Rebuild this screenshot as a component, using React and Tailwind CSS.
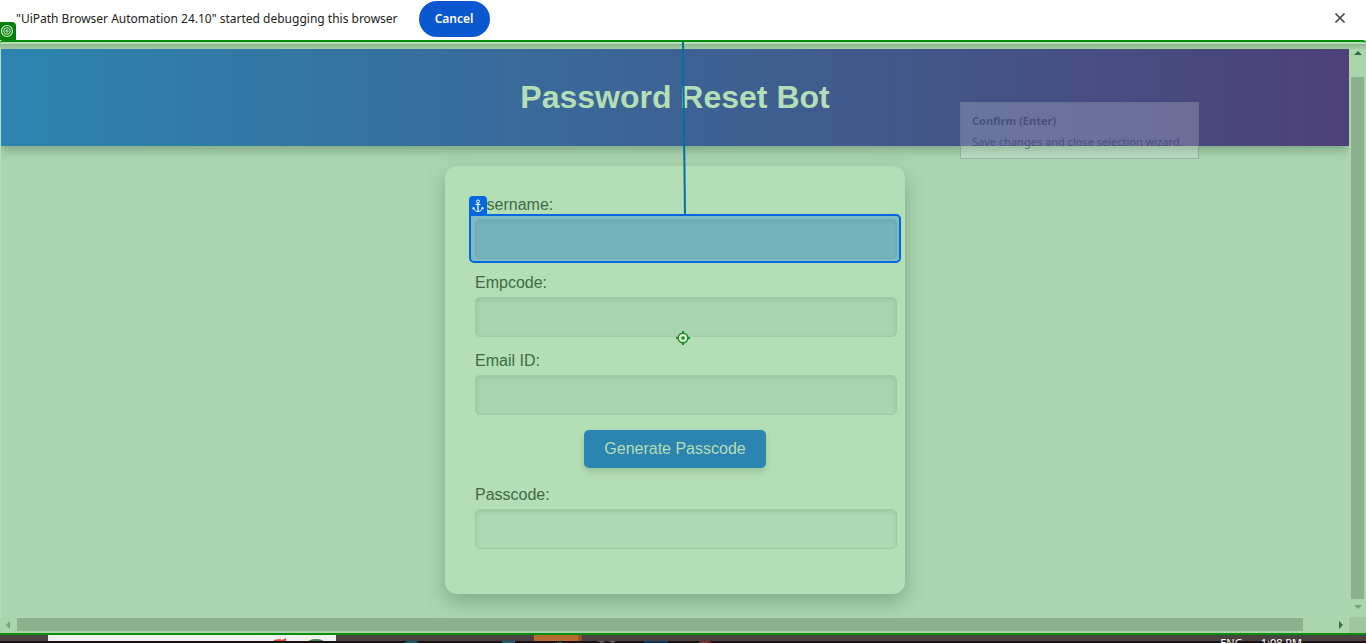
import React from "react";

function Field({ id, label, selected, tint }) {
  return (
    <div className="mb-[15px]">
      <label htmlFor={id} className="mb-[5px] block leading-[18px] text-[#406b46]">
        {label}
      </label>
      <div className="relative w-[422px] max-w-none">
        <input
          id={id}
          type={id === "passcode" ? "password" : "text"}
          className={`block h-10 w-full rounded-[5px] border border-[#9ec9a3] px-2.5 shadow-[inset_0_2px_4px_rgba(50,90,60,0.13)] outline-none ${tint}`}
        />
        {selected && (
          <div className="pointer-events-none absolute -top-[5px] -right-1 -bottom-1 -left-[6px] rounded-r-[5px] rounded-bl-[5px] border-2 border-[#0067df] bg-[#0067df]/30">
            <span className="absolute -top-5 -left-0.5 flex h-5 w-[18px] items-center justify-center rounded-t-[4px] bg-[#0067df]">
              <svg width="12" height="14" viewBox="0 0 12 14" fill="none" stroke="#fff" aria-hidden="true">
                <circle cx="6" cy="2.500" r="1.500" />
                <path d="M6 4v8.500" strokeWidth="1.300" />
                <path d="M3.500 5.500h5M1.300 8.500c.5 2.500 2.200 3.800 4.700 4 2.500-.2 4.200-1.500 4.700-4M.6 10.200l.7-1.900 1.600 1.200M11.400 10.200l-.7-1.900-1.600 1.200" />
              </svg>
            </span>
          </div>
        )}
      </div>
    </div>
  );
}

function DebugBar() {
  return (
    <div className="relative flex h-10 shrink-0 items-center bg-white pr-[18px] pb-[3px] pl-4 font-['Noto_Sans',sans-serif] text-xs text-[#222]">
      <p>"UiPath Browser Automation 24.10" started debugging this browser</p>
      <button type="button" className="ml-[21px] h-9 w-[71px] rounded-full bg-[#0b57d0] font-semibold text-white">
        Cancel
      </button>
      <button type="button" aria-label="Close" className="ml-auto px-0.5 pb-0.5">
        <svg width="12" height="12" viewBox="0 0 12 12" stroke="#444" strokeWidth="1.600" aria-hidden="true">
          <path d="M1.500 1.500l9 9M10.500 1.500l-9 9" />
        </svg>
      </button>
      <span className="absolute bottom-0 left-0 flex h-[18px] w-4 items-center justify-center rounded-tr-[4px] bg-[#038108]">
        <svg width="14" height="14" viewBox="0 0 14 14" fill="none" stroke="#d5ecd5" aria-hidden="true">
          <circle cx="6" cy="7" r="5.500" strokeWidth="1.200" />
          <circle cx="6" cy="7" r="3.300" />
          <circle cx="6" cy="7" r="1.200" />
        </svg>
      </span>
    </div>
  );
}

function VerticalScrollbar() {
  return (
    <div className="flex w-[17px] shrink-0 flex-col items-center bg-[#abd5ad] py-0.5">
      <svg width="8" height="4" viewBox="0 0 8 4" className="mb-[22px] shrink-0" aria-hidden="true">
        <path d="M0 4L4 0l4 4z" fill="#376a43" />
      </svg>
      <div className="w-[13px] grow bg-[#8ab18b]" />
      <svg width="8" height="4" viewBox="0 0 8 4" className="my-1.5 shrink-0" aria-hidden="true">
        <path d="M0 0l4 4 4-4z" fill="#78a17b" />
      </svg>
    </div>
  );
}

function HorizontalScrollbar() {
  return (
    <div className="flex h-4 shrink-0 bg-[#abd5ad]">
      <div className="flex grow items-center pr-[6px] pb-px pl-[6px]">
        <svg width="4" height="8" viewBox="0 0 4 8" className="mr-[7px] shrink-0" aria-hidden="true">
          <path d="M4 0L0 4l4 4z" fill="#78a17b" />
        </svg>
        <div className="h-[13px] grow bg-[#8ab18b]" />
        <svg width="4" height="8" viewBox="0 0 4 8" className="ml-9 shrink-0" aria-hidden="true">
          <path d="M0 0l4 4-4 4z" fill="#376a43" />
        </svg>
      </div>
      <div className="w-[17px] bg-[#9fc8a0]" />
    </div>
  );
}

function Taskbar() {
  return (
    <div className="relative flex h-2 shrink-0 overflow-hidden bg-[#4a4342]">
      <div className="w-12 shrink-0" />
      <div className="relative w-72 shrink-0 bg-[#f0f0f0]">
        <svg width="60" height="6" viewBox="0 0 60 6" className="absolute top-[3px] right-[5px]" aria-hidden="true">
          <path d="M0 6c2-4 5-5 9-5l2 1 4-2v6z" fill="#e5502d" />
          <ellipse cx="45" cy="5" rx="9" ry="4" fill="#4d8052" />
        </svg>
      </div>
      <div className="w-[198px] shrink-0" />
      <div className="w-12 shrink-0 border-r-4 border-[#955527] bg-[#b76c31]" />
      <div className="absolute inset-x-0 bottom-0 h-0.5 bg-[#1b1012]" />
      <svg width="520" height="3" viewBox="0 0 520 3" className="absolute bottom-0 left-[400px]" aria-hidden="true">
        <path d="M4 3c2-3 13-3 15 0z" fill="#14606b" />
        <path d="M102 1h13v2h-13z" fill="#176075" />
        <path d="M157 2h5v1h-5z" fill="#176075" />
        <path d="M197 1h8l-3 2z" fill="#706666" />
        <path d="M208 1h8l-3 2z" fill="#706666" />
        <path d="M244 1h24v2h-24z" fill="#0a326b" />
        <path d="M298 3c2-3 12-3 14 0z" fill="#8c2923" />
      </svg>
      <div className="absolute top-px right-16 flex gap-[18px] font-['Noto_Sans',sans-serif] text-[11px] leading-[14px] text-white">
        <span>ENG</span>
        <span>1:08 PM</span>
      </div>
    </div>
  );
}

export default function App() {
  return (
    <div className="relative flex h-screen flex-col overflow-hidden bg-white font-['Liberation_Sans',Arial,sans-serif]">
      <DebugBar />
      <div className="relative flex grow flex-col rounded-t-[3px] border-y-2 border-[#038e0c] bg-[#b4deb5]">
        <div className="mt-0.5 h-[5px] shrink-0 bg-linear-to-b from-[#90b591] to-[#a4cda6]" />
        <div className="flex grow">
          <main className="min-w-0 grow overflow-hidden border-l border-[#b4deb5] bg-[#acd6b1]">
            <header className="flex h-[97px] items-center justify-center bg-linear-to-r/srgb from-[#2c84b0] to-[#4d4178] pb-0.5 shadow-[0_4px_10px_rgba(50,90,60,0.4)]">
              <h1 className="text-[32px] font-bold text-[#b4deb5]">Password Reset Bot</h1>
            </header>
            <form
              className="mx-auto mt-5 w-[460px] rounded-xl bg-[#b4deb5] p-[30px] text-base shadow-[0_8px_20px_rgba(50,90,60,0.35)]"
              onSubmit={(e) => e.preventDefault()}
            >
              <Field id="username" label="Username:" selected tint="bg-[#abd5af]" />
              <Field id="empcode" label="Empcode:" tint="bg-[#aad4af]" />
              <Field id="email" label="Email ID:" tint="bg-[#aad4af]" />
              <button
                type="button"
                className="mx-auto mb-[18px] block h-[38px] rounded-[5px] bg-[#2c84b0] px-5 text-[#b4deb5] shadow-[0_4px_6px_rgba(50,90,60,0.2)]"
              >
                Generate Passcode
              </button>
              <Field id="passcode" label="Passcode:" tint="bg-[#afd9b2]" />
            </form>
          </main>
          <VerticalScrollbar />
        </div>
        <HorizontalScrollbar />
        <svg width="4" height="172" viewBox="0 0 4 172" className="absolute top-0 left-1/2 -ml-px" aria-hidden="true">
          <path d="M1 0l2 172" stroke="#00719f" strokeWidth="2" />
        </svg>
        <svg width="14" height="14" viewBox="0 0 14 14" fill="none" stroke="#168b1e" className="absolute top-1/2 left-1/2 -mt-[7px] -ml-[7px]" aria-hidden="true">
          <circle cx="7" cy="7" r="4.800" fill="#e0f2e1" strokeWidth="1.500" />
          <path d="M7 0v2.500M7 11.500v2.500M0 7h2.500M11.500 7h2.500" strokeWidth="2" />
          <circle cx="7" cy="7" r="1.800" fill="#168b1e" stroke="none" />
        </svg>
        <div
          role="tooltip"
          className="absolute top-[60px] right-[167px] h-[57px] w-[239px] border border-[#5b6f82]/40 bg-white/20 px-[11px] pt-[7px] font-['Noto_Sans',sans-serif] text-[11px] leading-[21px] whitespace-nowrap text-[#39416f]/70"
        >
          <p className="font-bold">Confirm (Enter)</p>
          <p>Save changes and close selection wizard.</p>
        </div>
      </div>
      <Taskbar />
    </div>
  );
}
